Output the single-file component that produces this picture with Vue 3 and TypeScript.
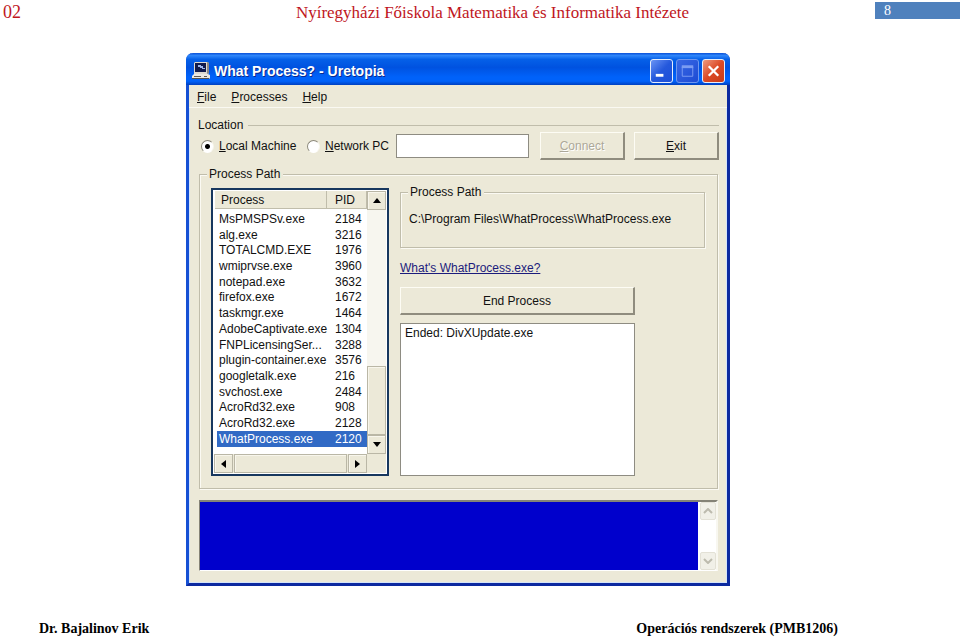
<script setup lang="ts">
import { computed, ref } from 'vue'

interface ProcessEntry {
  name: string
  pid: number
}

interface MenuEntry {
  key: string
  rest: string
}

const menus: MenuEntry[] = [
  { key: 'F', rest: 'ile' },
  { key: 'P', rest: 'rocesses' },
  { key: 'H', rest: 'elp' },
]

const processes: ProcessEntry[] = [
  { name: 'MsPMSPSv.exe', pid: 2184 },
  { name: 'alg.exe', pid: 3216 },
  { name: 'TOTALCMD.EXE', pid: 1976 },
  { name: 'wmiprvse.exe', pid: 3960 },
  { name: 'notepad.exe', pid: 3632 },
  { name: 'firefox.exe', pid: 1672 },
  { name: 'taskmgr.exe', pid: 1464 },
  { name: 'AdobeCaptivate.exe', pid: 1304 },
  { name: 'FNPLicensingSer...', pid: 3288 },
  { name: 'plugin-container.exe', pid: 3576 },
  { name: 'googletalk.exe', pid: 216 },
  { name: 'svchost.exe', pid: 2484 },
  { name: 'AcroRd32.exe', pid: 908 },
  { name: 'AcroRd32.exe', pid: 2128 },
  { name: 'WhatProcess.exe', pid: 2120 },
]

const machine = ref<'local' | 'network'>('local')
const host = ref('')
const selectedPid = ref(2120)
const log = ref('Ended: DivXUpdate.exe')
const output = ref('')

const selected = computed(() => processes.find((p) => p.pid === selectedPid.value))
const folder = computed(() => (selected.value?.name ?? '').replace(/\.exe$/i, ''))
</script>

<template>
  <div class="page">
    <header class="page-head">
      <span class="lesson">02</span>
      <h1>Nyíregyházi Főiskola Matematika és Informatika Intézete</h1>
      <span class="page-number">8</span>
    </header>

    <main class="window">
      <div class="title-bar">
        <svg class="app-icon" viewBox="0 0 18 18" aria-hidden="true">
          <path d="M2 1l1-1h12l2 1v10l-1 1H2z" fill="#dedad2" />
          <path d="M15 0l2 1v10l-2 1z" fill="#8c8883" />
          <rect x="3" y="1" width="11" height="9" fill="#101a4c" />
          <path d="M6 3h3v1h2v2h2v1h-3V6H8V5H6z" fill="#9db7ee" />
          <path d="M2 12h14l2 1v3l-1 1H0v-3z" fill="#ece9e2" />
          <path d="M0 16h17v1H0z" fill="#56524f" />
          <path d="M2 14h7v1H2zM12 14h3v1h-3z" fill="#5d5a58" />
        </svg>
        <h2>What Process? - Uretopia</h2>
        <div class="captions">
          <button type="button" class="caption" aria-label="Minimize">
            <svg viewBox="0 0 22 22"><rect x="5" y="14" width="8" height="3" fill="#fff" /></svg>
          </button>
          <button type="button" class="caption dim" aria-label="Maximize" disabled>
            <svg viewBox="0 0 22 22">
              <path d="M5.500 6.500h11v10h-11z" fill="none" stroke="#7c9cf2" />
              <path d="M5 5h12v3H5z" fill="#7c9cf2" />
            </svg>
          </button>
          <button type="button" class="caption close" aria-label="Close">
            <svg viewBox="0 0 22 22">
              <path d="M6 6l10 10M16 6L6 16" fill="none" stroke="#fff" stroke-width="2.400" />
            </svg>
          </button>
        </div>
      </div>

      <nav class="menu">
        <button v-for="m in menus" :key="m.key" type="button">
          <u>{{ m.key }}</u>{{ m.rest }}
        </button>
      </nav>

      <div class="client">
        <fieldset class="location">
          <legend>Location</legend>
          <div class="location-row">
            <label><input v-model="machine" type="radio" name="machine" value="local" /><span><u>L</u>ocal Machine</span></label>
            <label><input v-model="machine" type="radio" name="machine" value="network" /><span><u>N</u>etwork PC</span></label>
            <input v-model="host" class="host" type="text" aria-label="Network PC" />
            <button type="button" class="push" disabled><span><u>C</u>onnect</span></button>
            <button type="button" class="push"><span><u>E</u>xit</span></button>
          </div>
        </fieldset>

        <fieldset class="group main-group">
          <legend>Process Path</legend>
          <div class="columns">
            <div class="list">
              <div class="list-view">
                <table>
                  <thead>
                    <tr><th>Process</th><th class="pid">PID</th></tr>
                  </thead>
                  <tbody>
                    <tr
                      v-for="p in processes"
                      :key="p.pid"
                      :class="{ selected: p.pid === selectedPid }"
                      @click="selectedPid = p.pid"
                    >
                      <td>{{ p.name }}</td>
                      <td class="pid">{{ p.pid }}</td>
                    </tr>
                  </tbody>
                </table>
              </div>
              <div class="v-bar">
                <button type="button" aria-label="Scroll up">
                  <svg viewBox="0 0 8 5"><path d="M0 5l4-5 4 5z" /></svg>
                </button>
                <div class="track"></div>
                <div class="thumb"></div>
                <button type="button" aria-label="Scroll down">
                  <svg viewBox="0 0 8 5"><path d="M0 0l4 5 4-5z" /></svg>
                </button>
              </div>
              <div class="h-bar">
                <button type="button" aria-label="Scroll left">
                  <svg class="side" viewBox="0 0 5 8"><path d="M5 0L0 4l5 4z" /></svg>
                </button>
                <div class="thumb"></div>
                <button type="button" aria-label="Scroll right">
                  <svg class="side" viewBox="0 0 5 8"><path d="M0 0l5 4-5 4z" /></svg>
                </button>
              </div>
            </div>

            <div class="details">
              <fieldset class="group path">
                <legend>Process Path</legend>
                <p>C:\Program Files\{{ folder }}\{{ selected?.name }}</p>
              </fieldset>
              <a class="what" href="#">What's {{ selected?.name }}?</a>
              <button type="button" class="push end">End Process</button>
              <textarea v-model="log" class="log" aria-label="Log" readonly></textarea>
            </div>
          </div>
        </fieldset>

        <div class="console">
          <textarea v-model="output" aria-label="Output" readonly></textarea>
          <div class="console-bar">
            <button type="button" aria-label="Scroll output up" disabled>
              <svg viewBox="0 0 10 6"><path d="M1 5l4-4 4 4" /></svg>
            </button>
            <button type="button" aria-label="Scroll output down" disabled>
              <svg viewBox="0 0 10 6"><path d="M1 1l4 4 4-4" /></svg>
            </button>
          </div>
        </div>
      </div>
    </main>

    <footer class="page-foot">
      <span>Dr. Bajalinov Erik</span>
      <span>Operációs rendszerek (PMB1206)</span>
    </footer>
  </div>
</template>

<style>
body {
  margin: 0;
  background: #fff;
}
</style>

<style scoped>
* {
  box-sizing: border-box;
}

.page {
  min-height: 100vh;
  display: flex;
  flex-direction: column;
  font-family: "Liberation Serif", serif;
}

.page-head {
  display: grid;
  grid-template-columns: 110px 1fr 85px;
  align-items: start;
  height: 53px;
  padding-top: 2px;
  color: #c0161d;
}

.lesson {
  padding-left: 3px;
  font-size: 18px;
  line-height: 20px;
}

h1 {
  margin: 0;
  font-size: 17px;
  font-weight: 400;
  line-height: 22px;
  text-align: center;
}

.page-number {
  padding-left: 9px;
  background: #4f81bd;
  color: #fff;
  font-size: 14px;
  line-height: 17px;
}

.window {
  margin: 0 230px 0 186px;
  border-radius: 7px 7px 0 0;
  border: solid #0c2aa0;
  border-width: 0 3px 3px;
  border-left-color: #1550d4;
  background: #ece9d8;
  color: #111;
  font-family: "Liberation Sans", sans-serif;
  font-size: 12px;
  line-height: 14px;
}

.window button,
.window input,
.window textarea {
  font: inherit;
  color: inherit;
}

.title-bar {
  display: flex;
  align-items: center;
  height: 32px;
  margin: 0 -3px;
  padding: 3px 5px 0 6px;
  border-radius: 7px 7px 0 0;
  background: linear-gradient(#0a50d8 0, #2f86fa 8%, #0560e8 20%, #0052e0 45%, #0062fa 75%, #0062fa 88%, #0040c0 100%);
}

.app-icon {
  width: 18px;
  height: 18px;
}

h2 {
  flex: 1;
  margin: 0 0 0 4px;
  color: #fff;
  font-size: 14px;
  line-height: 18px;
  text-shadow: 1px 1px #0a2a90;
}

.captions {
  display: flex;
  gap: 3px;
}

.caption {
  width: 23px;
  height: 24px;
  padding: 0;
  border: 1px solid #e6eefc;
  border-radius: 3px;
  background: linear-gradient(135deg, #6b94f4, #2458dc 50%, #1c4fd8);
}

.caption svg {
  display: block;
  width: 21px;
  height: 22px;
}

.caption.dim {
  border-color: #6f97ef;
  background: linear-gradient(135deg, #3a68e4, #1c4bd4);
}

.caption.close {
  background: linear-gradient(135deg, #ee9a80, #dc4a26 50%, #c83c18);
}

.menu {
  display: flex;
  gap: 15px;
  height: 23px;
  padding: 5px 8px 3px;
  border-bottom: 1px solid #faf9f2;
}

.menu button {
  padding: 0;
  border: 0;
  background: none;
}

.client {
  padding: 10px 8px 12px 9px;
  box-shadow: inset 1px 0 #d4e4fa, inset -1px -1px #d4e4fa;
}

fieldset {
  min-width: 0;
  margin: 0;
  border: 1px solid #c0bdab;
}

legend {
  padding: 0 3px 0 2px;
}

.location {
  padding: 0;
  border-width: 1px 0 0;
}

.location legend {
  padding: 0 5px 0 0;
}

.location-row {
  display: flex;
  align-items: center;
  padding-left: 3px;
}

.location-row label {
  display: flex;
  align-items: center;
  gap: 5px;
  width: 106px;
}

.location-row label + label {
  width: 89px;
}

.location-row input[type="radio"] {
  appearance: none;
  flex: none;
  width: 13px;
  height: 13px;
  margin: 0;
  border: 1px solid;
  border-color: #8b887a #f8f6ec #fff #8b887a;
  border-radius: 50%;
  background: #fff;
}

.location-row input[type="radio"]:checked {
  background: radial-gradient(circle, #000 2px, #fff 3px);
}

.host {
  flex: 1;
  min-width: 0;
  height: 24px;
  margin-right: 11px;
  padding: 2px 4px;
  border: 1px solid #8e8c82;
  background: #fff;
}

.push {
  height: 28px;
  width: 85px;
  padding: 0;
  border: solid;
  border-width: 1px 2px 2px 1px;
  border-color: #fdfcf4 #8f8c7e #8f8c7e #fdfcf4;
  background: #ece9d8;
}

.push + .push {
  margin-left: 9px;
}

.window .push:disabled {
  color: #aca899;
  text-shadow: 1px 1px #fff;
}

.group {
  box-shadow: inset 1px 1px #fbfaf3, 1px 1px #fbfaf3;
}

.group > legend {
  background: #ece9d8;
}

.main-group {
  margin: 7px 1px 0;
  padding: 4px 12px 12px 11px;
}

.main-group > legend {
  margin-left: -4px;
}

.columns {
  display: grid;
  grid-template-columns: 178px 1fr;
  gap: 11px;
}

.list {
  display: grid;
  grid-template-columns: 1fr 19px;
  grid-template-rows: 1fr 19px;
  margin-top: 3px;
  padding: 1px;
  border: 2px solid #17375e;
  background: #fff;
}

.list-view {
  min-width: 0;
  padding: 0 0 7px 1px;
}

table {
  width: 100%;
  height: 256px;
  border-spacing: 0;
  table-layout: fixed;
}

th,
td {
  padding: 0 0 0 2px;
  text-align: left;
  font-weight: 400;
  line-height: 14px;
  white-space: nowrap;
}

th {
  height: 20px;
  padding-left: 6px;
  border-bottom: 2px solid #fff;
  background: #ece9d8 padding-box;
  box-shadow: inset -1px -1px #c0bdab;
}

.pid {
  width: 40px;
  padding-left: 8px;
}

td:first-child {
  border-left: 2px solid transparent;
  background-clip: padding-box;
}

.selected td {
  background-color: #316ac5;
  color: #fff;
}

.v-bar {
  display: flex;
  flex-direction: column;
  background: #f7f6ef;
}

.h-bar {
  grid-column: 1 / -1;
  display: flex;
  gap: 1px;
  padding-right: 19px;
  background: #ece9d8;
}

.v-bar button,
.h-bar button {
  flex: none;
  display: grid;
  place-items: center;
  width: 19px;
  height: 19px;
  padding: 0;
}

.v-bar button,
.h-bar button,
.thumb {
  border: 1px solid #bab7a6;
  background: #ece9d8;
  box-shadow: inset 1px 1px #f8f6ec;
}

.list svg {
  width: 8px;
  height: 5px;
}

.list svg.side {
  width: 5px;
  height: 8px;
}

.track {
  flex: 159;
}

.v-bar .thumb {
  flex: 68;
}

.h-bar .thumb {
  flex: 1;
}

.details {
  display: flex;
  flex-direction: column;
  align-items: flex-start;
}

.path {
  align-self: stretch;
  padding: 13px 8px 21px;
}

.path legend {
  margin-left: -1px;
}

.path p {
  margin: 0;
  white-space: nowrap;
}

.what {
  margin-top: 13px;
  color: #1c1c7c;
}

.end {
  width: 77%;
  margin-top: 12px;
}

.log {
  display: block;
  flex: 1;
  width: 77%;
  margin-top: 8px;
  padding: 2px 4px;
  border: 1px solid #8e8c82;
  background: #fff;
  resize: none;
}

.console {
  display: flex;
  height: 71px;
  margin: 11px 1px 0;
  border: solid;
  border-width: 2px 2px 1px 1px;
  border-color: #858377 #f8f7f0 #fff #858377;
  background: #fff;
}

.console textarea {
  flex: 1;
  min-width: 0;
  padding: 2px;
  border: 0;
  background: #0000cc;
  resize: none;
}

.console-bar {
  display: flex;
  flex-direction: column;
  justify-content: space-between;
  width: 18px;
  padding-left: 2px;
}

.console-bar button {
  display: grid;
  place-items: center;
  width: 16px;
  height: 18px;
  padding: 0;
  border: 1px solid #e3e1d6;
  border-radius: 2px;
  background: #f1f0e8;
}

.console-bar svg {
  width: 10px;
  height: 6px;
  fill: none;
  stroke: #bdbbae;
  stroke-width: 2;
}

.page-foot {
  display: flex;
  justify-content: space-between;
  margin-top: auto;
  padding: 0 122px 0 39px;
  font-size: 14px;
  font-weight: 700;
  line-height: 18px;
}
</style>
